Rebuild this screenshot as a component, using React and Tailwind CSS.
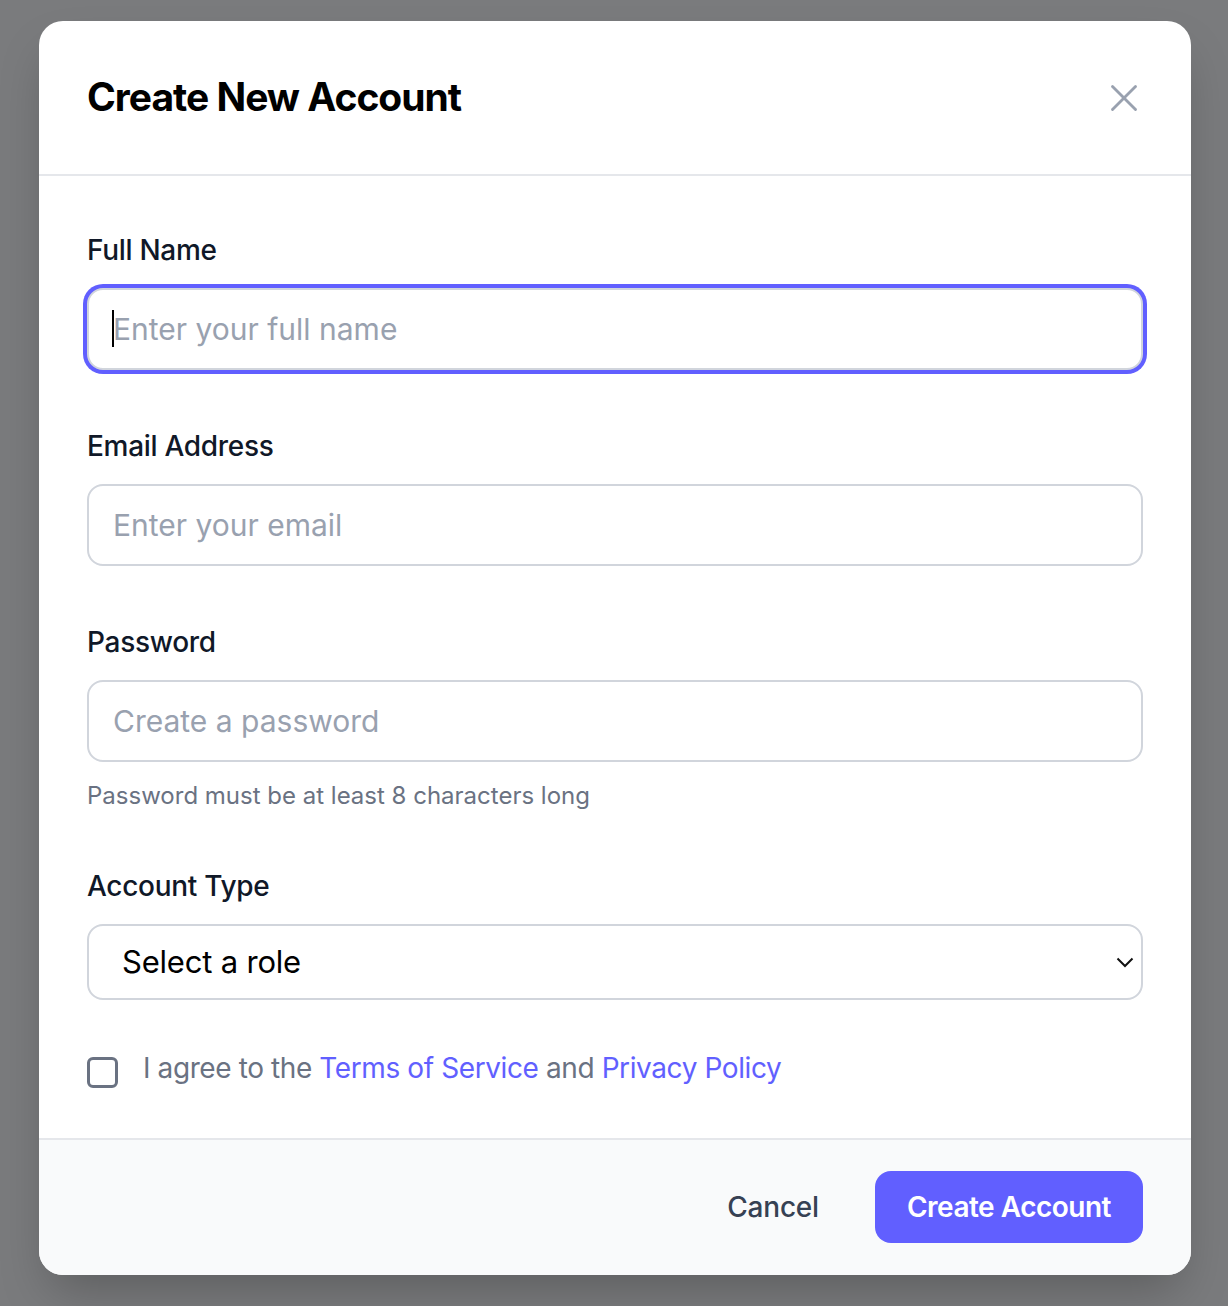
import { X } from 'lucide-react';

const font = { fontFamily: 'Inter, "Noto Sans", sans-serif' };

function Field({ label, placeholder, type = 'text', focused, hint, className = '' }) {
  return (
    <div className={className}>
      <label className="block text-[28px] leading-[40px] font-medium tracking-[-0.3px] text-gray-900">{label}</label>
      <div className="relative mt-[18px]">
        <input
          type={type}
          placeholder={placeholder}
          className={`block w-full h-[82px] rounded-[16px] border-2 border-gray-300 bg-white px-6 text-[30px] text-gray-900 placeholder:text-gray-400 outline-none ${
            focused ? 'ring-4 ring-indigo-500' : ''
          }`}
        />
        {/* fake caret for the focused field */}
        {focused && <span className="absolute left-[25px] top-[22px] h-[37px] w-[2px] bg-black" />}
      </div>
      {hint && <p className="mt-[18px] text-[24px] leading-[32px] text-gray-500">{hint}</p>}
    </div>
  );
}

export default function App() {
  return (
    <div className="min-h-screen bg-[#7a7b7d] pt-[21px] pb-[31px]" style={font}>
      <div className="ml-[39px] w-[1152px] overflow-hidden rounded-[24px] bg-white shadow-2xl">
        {/* Header */}
        <div className="flex h-[155px] items-center justify-between border-b-2 border-gray-200 pl-[48px] pr-[44px]">
          <h2 className="text-[39px] font-bold tracking-[-1px] text-black">Create New Account</h2>
          <button className="text-gray-400">
            <X size={46} strokeWidth={1.5} />
          </button>
        </div>

        {/* Body */}
        <div className="px-[48px] pt-[54px] pb-[50px]">
          <Field label="Full Name" placeholder="Enter your full name" focused />
          <Field className="mt-[56px]" label="Email Address" placeholder="Enter your email" type="email" />
          <Field
            className="mt-[56px]"
            label="Password"
            placeholder="Create a password"
            type="password"
            hint="Password must be at least 8 characters long"
          />

          <div className="mt-[54px]">
            <label className="block text-[28px] leading-[40px] font-medium tracking-[-0.3px] text-gray-900">
              Account Type
            </label>
            <div className="relative mt-[18px]">
              <select className="block w-full h-[76px] appearance-none rounded-[16px] border-2 border-gray-300 bg-white pl-[33px] text-[31px] tracking-[-0.2px] text-black outline-none">
                <option>Select a role</option>
                <option>Admin</option>
                <option>Editor</option>
                <option>Viewer</option>
              </select>
              <svg
                className="pointer-events-none absolute right-[9px] top-1/2 -translate-y-1/2"
                width="18"
                height="12"
                viewBox="0 0 18 12"
                fill="none"
              >
                <path d="M1.5 2.5 9 10l7.5-7.5" stroke="#111" strokeWidth="2" />
              </svg>
            </div>
          </div>

          <div className="mt-[48px] flex items-start">
            <span className="mt-[9px] h-[31px] w-[31px] shrink-0 rounded-[6px] border-[3px] border-gray-500 bg-white" />
            <p className="ml-[25px] text-[28px] leading-[40px] tracking-[-0.4px] text-gray-500">
              I agree to the <span className="text-indigo-500">Terms of Service</span> and{' '}
              <span className="text-indigo-500">Privacy Policy</span>
            </p>
          </div>
        </div>

        {/* Footer */}
        <div className="flex justify-end gap-[24px] border-t-2 border-gray-200 bg-gray-50 px-[48px] pt-[31px] pb-[32px]">
          <button className="h-[72px] px-[32px] text-[28px] font-medium tracking-[-0.2px] text-gray-700">Cancel</button>
          <button className="h-[72px] rounded-[16px] bg-indigo-500 px-[32px] text-[28px] font-semibold tracking-[-0.5px] text-white">
            Create Account
          </button>
        </div>
      </div>
    </div>
  );
}
